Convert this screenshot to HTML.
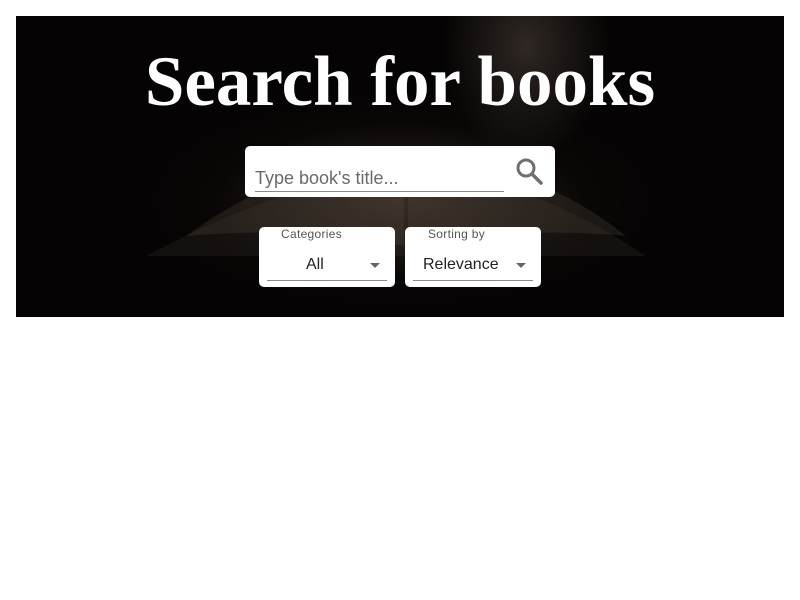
<!DOCTYPE html>
<html><head><meta charset="utf-8"><style>
body{margin:0;background:#fff;width:800px;height:600px;position:relative;font-family:"Liberation Sans",sans-serif}
.hero{position:absolute;left:16px;top:16px;width:768px;height:301px;overflow:hidden;
background:
radial-gradient(ellipse 120px 160px at 510px 30px,rgba(110,95,85,.4),rgba(0,0,0,0) 70%),
radial-gradient(ellipse 260px 110px at 385px 185px,rgba(70,58,48,.7),rgba(20,15,12,.3) 70%,rgba(0,0,0,0)),
#050303;}
.book{position:absolute;left:110px;top:110px;width:540px;height:140px;}
h1{position:absolute;left:0;width:768px;top:26px;margin:0;text-align:center;color:#fff;font-family:"Liberation Serif",serif;font-weight:bold;font-size:71px;line-height:80px}
.box{position:absolute;background:#fff;border-radius:5px}
.line{position:absolute;height:1px;background:#8a8a8a}
.lbl{position:absolute;font-size:12px;color:#555;top:0;letter-spacing:.3px}
.val{position:absolute;font-size:16px;color:#222;top:29px}
.arr{position:absolute;width:0;height:0;border-left:5px solid transparent;border-right:5px solid transparent;border-top:5px solid #666;top:36px}
</style></head><body>
<div class="hero">
<svg class="book" viewBox="0 0 540 140"><path d="M20 130 Q150 60 280 40 Q400 50 520 130 Z" fill="rgba(60,50,42,.25)"/><path d="M60 110 Q170 30 278 38 L278 120 Q170 100 60 110Z" fill="rgba(90,78,66,.25)"/><path d="M282 38 Q400 30 500 110 Q400 100 282 120Z" fill="rgba(90,78,66,.25)"/></svg>
<h1>Search for books</h1>
</div>
<div class="box" style="left:245px;top:146px;width:310px;height:51px">
<div style="position:absolute;left:10px;top:22px;font-size:18px;color:#6a6a6a">Type book's title...</div>
<div class="line" style="left:10px;top:45px;width:249px"></div>
<svg style="position:absolute;left:270px;top:11px" width="28" height="28" viewBox="0 0 28 28"><circle cx="11" cy="11" r="8" fill="none" stroke="#6f6f6f" stroke-width="3"/><path d="M17 17 L26 26" stroke="#6f6f6f" stroke-width="3.5" stroke-linecap="round"/></svg>
</div>
<div class="box" style="left:259px;top:227px;width:136px;height:60px">
<div class="lbl" style="left:22px;top:0">Categories</div>
<div class="val" style="left:47px">All</div>
<div class="arr" style="left:111px"></div>
<div class="line" style="left:8px;top:53px;width:120px"></div>
</div>
<div class="box" style="left:405px;top:227px;width:136px;height:60px">
<div class="lbl" style="left:23px;top:0">Sorting by</div>
<div class="val" style="left:18px">Relevance</div>
<div class="arr" style="left:111px"></div>
<div class="line" style="left:8px;top:53px;width:120px"></div>
</div>
</body></html>
